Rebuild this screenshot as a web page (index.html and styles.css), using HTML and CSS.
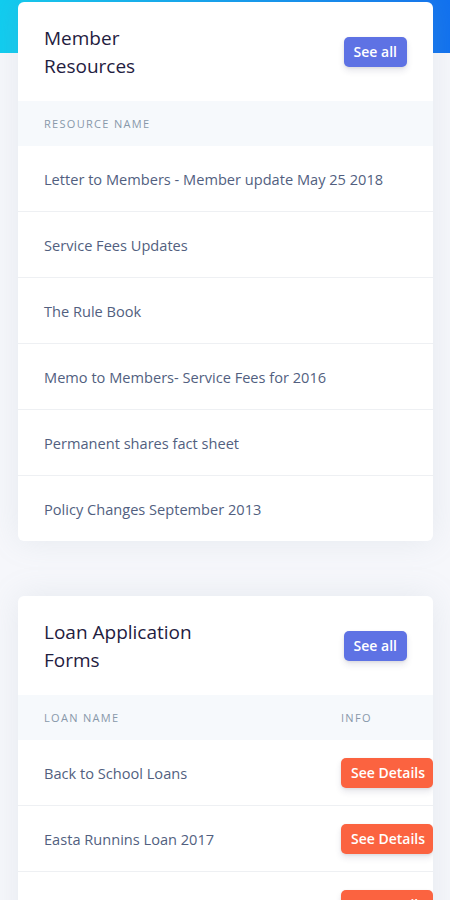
FILE: index.html
```html
<!DOCTYPE html>
<html lang="en">
<head>
  <meta charset="UTF-8">
  <meta name="viewport" content="width=device-width, initial-scale=1.0">
  <title>Member Resources</title>
  <link rel="stylesheet" href="styles.css">
</head>
<body>

<div class="header"></div>

<div class="content">

  <div class="card">
    <div class="card-header">
      <h3 class="card-title">Member Resources</h3>
      <a href="#" class="btn btn-primary">See all</a>
    </div>
    <table class="table">
      <thead>
        <tr><th>Resource name</th></tr>
      </thead>
      <tbody>
        <tr><td>Letter to Members - Member update May 25 2018</td></tr>
        <tr><td>Service Fees Updates</td></tr>
        <tr><td>The Rule Book</td></tr>
        <tr><td>Memo to Members- Service Fees for 2016</td></tr>
        <tr><td>Permanent shares fact sheet</td></tr>
        <tr><td>Policy Changes September 2013</td></tr>
      </tbody>
    </table>
  </div>

  <div class="card">
    <div class="card-header">
      <h3 class="card-title">Loan Application Forms</h3>
      <a href="#" class="btn btn-primary">See all</a>
    </div>
    <table class="table">
      <thead>
        <tr><th>Loan name</th><th class="col-info">Info</th></tr>
      </thead>
      <tbody>
        <tr><td>Back to School Loans</td><td class="col-info"><a href="#" class="btn btn-warning">See Details</a></td></tr>
        <tr><td>Easta Runnins Loan 2017</td><td class="col-info"><a href="#" class="btn btn-warning">See Details</a></td></tr>
        <tr><td>Home Loan</td><td class="col-info"><a href="#" class="btn btn-warning">See Details</a></td></tr>
      </tbody>
    </table>
  </div>

</div>

</body>
</html>
```

FILE: styles.css
```css
body {
  font-family: "Open Sans", Arial, sans-serif;
  background-color: #f6f7fb;
  margin: 0;
  padding: 0;
  color: #525f7f;
}
.header {
  height: 53px;
  background: linear-gradient(87deg, #11cdef 0, #1171ef 100%);
}
.content {
  margin-top: -51px;
  padding: 0 17px 0 18px;
}
.card {
  background: white;
  border-radius: 6px;
  box-shadow: 0 0 2rem 0 rgba(136, 152, 170, 0.15);
  overflow: hidden;
  margin-bottom: 55px;
}
.card-header {
  display: flex;
  align-items: center;
  justify-content: space-between;
  height: 99px;
  padding: 0 26px 0 26px;
}
.card-title {
  margin: 0;
  max-width: 160px;
  font-size: 19px;
  font-weight: 400;
  line-height: 28px;
  color: #1f2040;
}
.btn {
  display: inline-block;
  height: 30px;
  line-height: 30px;
  padding: 0 10px;
  border-radius: 5px;
  color: white;
  font-size: 14px;
  font-weight: 600;
  text-decoration: none;
  box-shadow: 0 4px 6px rgba(50, 50, 93, 0.11), 0 1px 3px rgba(0, 0, 0, 0.08);
}
.btn-primary {
  background-color: #5e72e4;
}
.btn-warning {
  background-color: #fb6340;
  width: 72px;
  text-align: center;
}
.table {
  width: 100%;
  border-collapse: collapse;
}
.table th {
  background-color: #f6f9fc;
  height: 45px;
  padding: 0 26px;
  text-align: left;
  font-size: 11px;
  font-weight: 400;
  letter-spacing: 1.3px;
  text-transform: uppercase;
  color: #8898aa;
}
.table td {
  height: 65px;
  padding: 0 26px;
  font-size: 14.6px;
  white-space: nowrap;
  border-top: 1px solid #eef0f3;
}
.table tbody tr:first-child td {
  border-top: none;
}
.table .col-info {
  width: 92px;
  padding: 0;
}
```
